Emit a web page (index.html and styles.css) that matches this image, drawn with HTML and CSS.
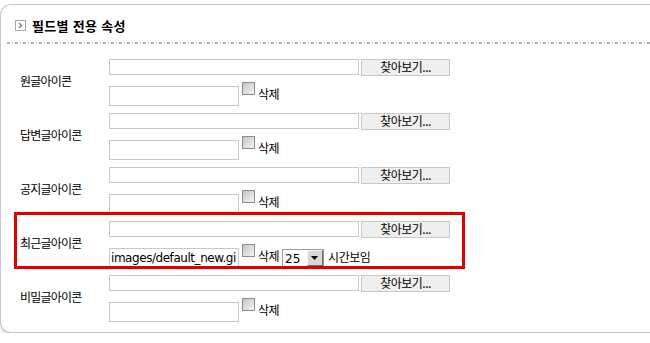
FILE: index.html
```html
<!DOCTYPE html>
<html lang="ko">
<head>
<meta charset="utf-8">
<title>필드별 전용 속성</title>
<link rel="stylesheet" href="styles.css">
</head>
<body>
<div class="panel">
  <div class="panel-head">
    <svg class="head-icon" width="11" height="11" viewBox="0 0 11 11"><rect x="0.5" y="0.5" width="10" height="10" fill="#fff" stroke="#a8a8a8"/><path d="M4 3 L6.5 5.5 L4 8" fill="none" stroke="#777" stroke-width="1.3"/></svg>
    <h2 class="title">필드별 전용 속성</h2>
  </div>
  <div class="dash"></div>
  <div class="rows">
    <div class="row">
      <div class="label">원글아이콘</div>
      <div class="field">
        <div class="line1"><span class="file"></span><span class="btn">찾아보기...</span></div>
        <div class="line2"><span class="text"></span><span class="chk"></span><span class="word">삭제</span></div>
      </div>
    </div>
    <div class="row">
      <div class="label">답변글아이콘</div>
      <div class="field">
        <div class="line1"><span class="file"></span><span class="btn">찾아보기...</span></div>
        <div class="line2"><span class="text"></span><span class="chk"></span><span class="word">삭제</span></div>
      </div>
    </div>
    <div class="row">
      <div class="label">공지글아이콘</div>
      <div class="field">
        <div class="line1"><span class="file"></span><span class="btn">찾아보기...</span></div>
        <div class="line2"><span class="text"></span><span class="chk"></span><span class="word">삭제</span></div>
      </div>
    </div>
    <div class="row row-marked">
      <div class="mark"></div>
      <div class="label">최근글아이콘</div>
      <div class="field">
        <div class="line1"><span class="file"></span><span class="btn">찾아보기...</span></div>
        <div class="line2"><span class="text value">images/default_new.gi</span><span class="chk"></span><span class="word">삭제</span><span class="select"><span class="sel-val">25</span><span class="sel-arrow"><svg width="8" height="5" viewBox="0 0 8 5"><path d="M0 0 H7 L3.5 4 Z" fill="#000"/></svg></span></span><span class="word after">시간보임</span></div>
      </div>
    </div>
    <div class="row">
      <div class="label">비밀글아이콘</div>
      <div class="field">
        <div class="line1"><span class="file"></span><span class="btn">찾아보기...</span></div>
        <div class="line2"><span class="text"></span><span class="chk"></span><span class="word">삭제</span></div>
      </div>
    </div>
  </div>
</div>
</body>
</html>
```
FILE: styles.css
```css
html, body {
  margin: 0;
  padding: 0;
  overflow: hidden;
  background: #fff;
}
body {
  font-family: "Noto Sans CJK KR", "Liberation Sans", sans-serif;
  font-size: 12px;
  color: #000;
  padding-top: 4px;
}
.panel {
  width: 649px;
  border: 1px solid #c8c8c8;
  border-right: none;
  border-radius: 11px 0 0 11px;
  box-shadow: 0 3px 2px #e2e2e2;
  background: #fff;
}
.panel-head {
  display: flex;
  align-items: center;
  gap: 6px;
  padding: 11px 0 8px 14px;
  height: 18px;
}
.head-icon {
  display: block;
  flex: none;
}
.title {
  margin: 0;
  font-size: 13px;
  font-weight: bold;
  line-height: 18px;
  letter-spacing: 0.3px;
  position: relative;
  top: 1px;
}
.dash {
  margin-left: 6px;
  height: 2px;
  background-image: repeating-linear-gradient(90deg, #b0b0b0 0 3px, transparent 3px 5px, #c4c4c4 5px 6px, transparent 6px 8px);
}
.rows {
  padding-top: 15px;
  padding-bottom: 3px;
}
.row {
  display: grid;
  grid-template-columns: 108px auto;
  padding-bottom: 7px;
}
.row-marked {
  position: relative;
}
.mark {
  position: absolute;
  left: 13px;
  top: -9px;
  width: 451px;
  height: 57px;
  box-sizing: border-box;
  border: 3px solid #e00000;
  pointer-events: none;
}
.label {
  align-self: center;
  padding-left: 19px;
  padding-bottom: 4px;
  letter-spacing: -0.8px;
  line-height: 14px;
}
.line1 {
  display: flex;
  gap: 2px;
  height: 16px;
}
.file {
  width: 250px;
  height: 16px;
  box-sizing: border-box;
  border: 1px solid #c8c8c8;
  background: #fff;
}
.btn {
  width: 89px;
  height: 17px;
  box-sizing: border-box;
  border: 1px solid #c8c8c8;
  background: #efefef;
  text-align: center;
  line-height: 14px;
  font-size: 12px;
  letter-spacing: -0.5px;
}
.line2 {
  display: flex;
  align-items: flex-start;
  margin-top: 11px;
  height: 20px;
}
.text {
  width: 130px;
  height: 20px;
  box-sizing: border-box;
  border: 1px solid #c8c8c8;
  background: #fff;
  overflow: hidden;
  white-space: nowrap;
}
.value {
  font-family: "DejaVu Sans", sans-serif;
  font-size: 12px;
  line-height: 18px;
  padding-left: 1px;
  letter-spacing: -0.45px;
}
.chk {
  width: 13px;
  height: 13px;
  box-sizing: border-box;
  margin: -4px 0 0 3px;
  border: 1px solid #8c8c8c;
  background: linear-gradient(135deg, #c4c4c4, #f6f6f6);
}
.word {
  margin-left: 3px;
  margin-top: 1px;
  line-height: 14px;
  letter-spacing: -0.5px;
}
.select {
  display: flex;
  margin: 1px 0 0 3px;
  width: 42px;
  height: 18px;
  box-sizing: border-box;
  border: 1px solid #9a9a9a;
  background: #fff;
}
.sel-val {
  flex: 1;
  font-family: "DejaVu Sans", sans-serif;
  font-size: 12px;
  line-height: 16px;
  padding-left: 2px;
  padding-top: 1px;
}
.sel-arrow {
  width: 16px;
  box-sizing: border-box;
  border: 1px solid;
  border-color: #f4f4f4 #6a6a6a #6a6a6a #f4f4f4;
  background: #d8d8d8;
  display: flex;
  align-items: center;
  justify-content: center;
}
.sel-arrow svg {
  display: block;
}
.after {
  margin-left: 4px;
  margin-top: 2px;
}
```
